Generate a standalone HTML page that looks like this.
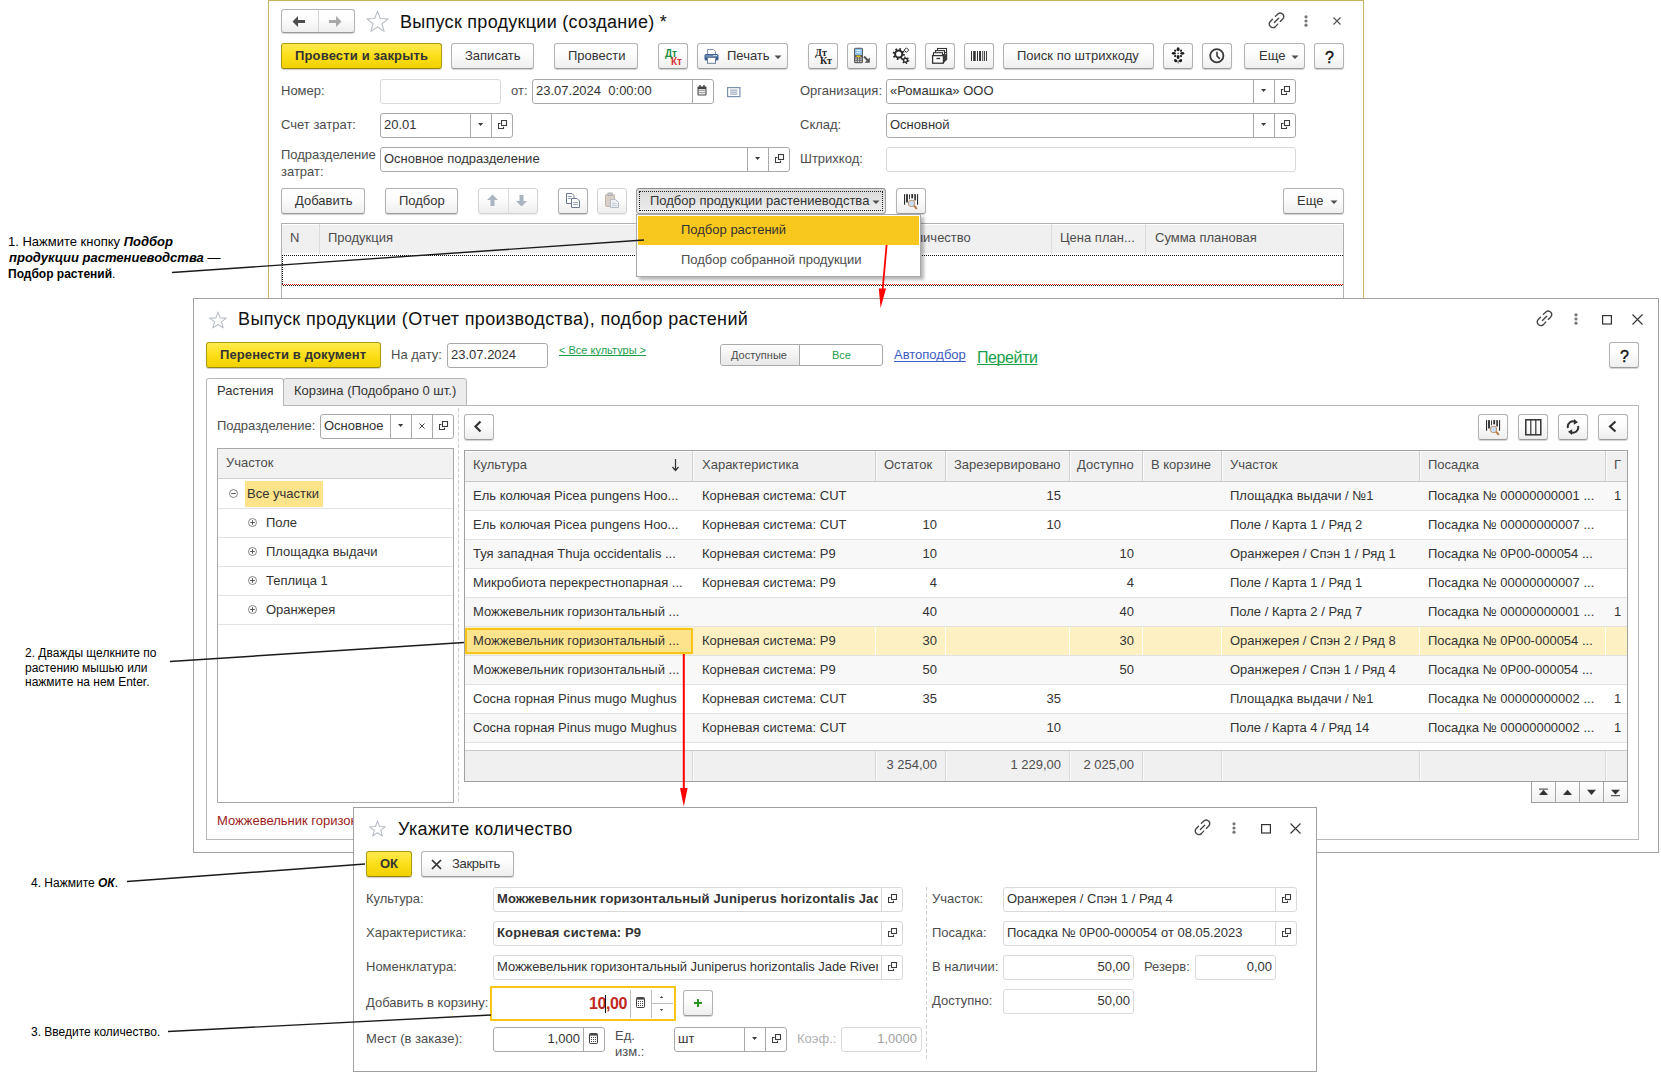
<!DOCTYPE html><html><head><meta charset='utf-8'><style>
*{box-sizing:border-box}
html,body{margin:0;padding:0;background:#fff;width:1661px;height:1073px;overflow:hidden;position:relative}
body{font-family:"Liberation Sans",sans-serif}
.t{position:absolute;white-space:pre;font-family:"Liberation Sans",sans-serif;text-decoration-skip-ink:none}
.b{position:absolute;border:1px solid #b3b3b3;border-bottom-color:#9a9a9a;border-radius:3px;background:linear-gradient(#ffffff 0%,#fdfdfd 40%,#eeeeee 100%);box-shadow:0 1px 1px rgba(0,0,0,.18)}
.yb{position:absolute;border:1px solid #ab9a12;border-bottom-color:#98870a;border-radius:3px;background:linear-gradient(#ffea4d 0%,#fcdf1a 50%,#f2d100 100%);box-shadow:0 1px 1px rgba(0,0,0,.2)}
.inp{position:absolute;border:1px solid #a9a9a9;border-radius:3px;background:#fff}
.inpl{position:absolute;border:1px solid #d9d9d9;border-radius:3px;background:#fff}
.win{position:absolute;background:#fff}
</style></head><body><div style='position:absolute;left:268px;top:0px;width:1096px;height:320px;border:1px solid #c8b55c;background:#fff'></div>
<div class='b' style='left:281px;top:9px;width:74px;height:24px;'></div>
<div style='position:absolute;left:318px;top:10px;width:1px;height:22px;background:#d6d6d6'></div>
<svg style='position:absolute;left:292px;top:15px;' width='14' height='13' viewBox='0 0 14 13'><path d='M0.5 6.5 L6 1 V5 H13 V8 H6 V12 Z' fill='#4d4d4d'/></svg>
<svg style='position:absolute;left:328px;top:15px;' width='14' height='13' viewBox='0 0 14 13'><path d='M13.5 6.5 L8 1 V5 H1 V8 H8 V12 Z' fill='#a8a8a8'/></svg>
<svg style='position:absolute;left:366px;top:10px;' width='23' height='25' viewBox='0 0 23 25'><polygon points='11.50,1.10 14.26,8.49 22.15,8.84 15.97,13.75 18.08,21.36 11.50,17.00 4.92,21.36 7.03,13.75 0.85,8.84 8.74,8.49' fill='none' stroke='#b8bec6' stroke-width='1.1' stroke-linejoin='round'/></svg>
<div class='t ' style='left:400px;top:13px;font-size:18px;line-height:18px;color:#111;letter-spacing:0.28px'>Выпуск продукции (создание) *</div>
<svg style='position:absolute;left:1268px;top:12px;' width='17' height='17' viewBox='0 0 17 17'><g fill='none' stroke='#444' stroke-width='1.35' stroke-linecap='round'><path d='M7.4 4.3 L10.2 1.8 Q12.6 0 14.8 2.3 Q16.8 4.6 14.7 7 L12.3 9.4'/><path d='M4.5 7.2 L2.1 9.7 Q0.2 12.2 2.4 14.5 Q4.8 16.7 7.4 14.6 L9.7 12.1'/><path d='M6.4 10.5 L10.7 6.3'/></g></svg>
<svg style='position:absolute;left:1304px;top:15px;' width='4' height='12' viewBox='0 0 4 12'><circle cx='2' cy='1.8' r='1.6' fill='#777'/><circle cx='2' cy='6' r='1.6' fill='#777'/><circle cx='2' cy='10.2' r='1.6' fill='#777'/></svg>
<svg style='position:absolute;left:1333px;top:17px;' width='8' height='8' viewBox='0 0 8 8'><path d='M0.5 0.5 L7.5 7.5 M7.5 0.5 L0.5 7.5' stroke='#555' stroke-width='1.2'/></svg>
<div class='yb' style='left:281px;top:43px;width:161px;height:26px;'></div>
<div class='t ' style='left:295px;top:49px;font-size:13px;line-height:13px;color:#333;font-weight:bold;letter-spacing:0.15px'>Провести и закрыть</div>
<div class='b' style='left:451px;top:43px;width:83px;height:26px;'></div>
<div class='t ' style='left:465px;top:49px;font-size:13px;line-height:13px;color:#333;'>Записать</div>
<div class='b' style='left:554px;top:43px;width:84px;height:26px;'></div>
<div class='t ' style='left:568px;top:49px;font-size:13px;line-height:13px;color:#333;'>Провести</div>
<div class='b' style='left:658px;top:43px;width:30px;height:26px;'></div>
<div class='t ' style='left:665px;top:49px;font-size:10px;line-height:10px;color:#1a9040;font-weight:bold;'>Дт</div>
<div class='t ' style='left:671px;top:57px;font-size:10px;line-height:10px;color:#d83535;font-weight:bold;'>Кт</div>
<div class='b' style='left:697px;top:43px;width:91px;height:26px;'></div>
<svg style='position:absolute;left:704px;top:49px;' width='16' height='15' viewBox='0 0 16 15'><path d='M3.5 0.5 H9.5 L11.5 2.5 V6 H3.5 Z' fill='#fff' stroke='#8090a8'/><rect x='0.5' y='5' width='14' height='6.5' rx='1.6' fill='#3d6296'/><rect x='1.5' y='6.5' width='12' height='1' fill='#9bb2d0'/><rect x='9.5' y='6' width='1.2' height='1' fill='#fff'/><rect x='11.5' y='6' width='1.2' height='1' fill='#fff'/><rect x='3.5' y='8.5' width='8' height='5.8' fill='#fff' stroke='#6a7d98'/></svg>
<div class='t ' style='left:727px;top:49px;font-size:13px;line-height:13px;color:#333;'>Печать</div>
<svg style='position:absolute;left:774px;top:55px;' width='8' height='5' viewBox='0 0 8 5'><path d='M0.5 0.5 L7.5 0.5 L4 4 Z' fill='#4d4d4d'/></svg>
<div class='b' style='left:808px;top:43px;width:30px;height:26px;'></div>
<div class='t ' style='left:815px;top:48px;font-size:10px;line-height:10px;color:#222;font-weight:bold;font-family:&quot;Liberation Serif&quot;,serif'>Дт</div>
<div class='t ' style='left:820px;top:56px;font-size:10px;line-height:10px;color:#222;font-weight:bold;font-family:&quot;Liberation Serif&quot;,serif'>Кт</div>
<div class='b' style='left:847px;top:43px;width:30px;height:26px;'></div>
<svg style='position:absolute;left:853px;top:47px;' width='18' height='17' viewBox='0 0 18 17'><rect x='1' y='0.8' width='9' height='15.4' rx='1.5' fill='#5a5a5a'/><rect x='2' y='1.8' width='7' height='6.2' fill='#8cc4f0'/><path d='M3.5 3.5 H7.5 M3.5 5.5 H7.5' stroke='#e8f4ff' stroke-width='0.9'/><rect x='3.4' y='8.6' width='4.2' height='1.3' fill='#f5d000'/><g fill='#e8e8e8'><rect x='2.3' y='10.4' width='1.4' height='1.1'/><rect x='4.8' y='10.4' width='1.4' height='1.1'/><rect x='7.3' y='10.4' width='1.4' height='1.1'/><rect x='2.3' y='12.2' width='1.4' height='1.1'/><rect x='4.8' y='12.2' width='1.4' height='1.1'/><rect x='7.3' y='12.2' width='1.4' height='1.1'/><rect x='2.3' y='14' width='1.4' height='1.1'/><rect x='4.8' y='14' width='1.4' height='1.1'/><rect x='7.3' y='14' width='1.4' height='1.1'/></g><path d='M11 9.5 L15.2 13.7' stroke='#555' stroke-width='2'/><path d='M16.8 10.5 V15.8 H11.5 Z' fill='#555'/></svg>
<div class='b' style='left:886px;top:43px;width:30px;height:26px;'></div>
<svg style='position:absolute;left:892px;top:47px;' width='18' height='17' viewBox='0 0 18 17'><g fill='none' stroke='#2a2a2a'><circle cx='6.7' cy='7' r='3.6' stroke-width='2'/><circle cx='6.7' cy='7' r='5' stroke-width='2.2' stroke-dasharray='1.7 2.23'/><circle cx='13.5' cy='13.3' r='2' stroke-width='1.5'/><circle cx='13.5' cy='13.3' r='3.1' stroke-width='1.5' stroke-dasharray='1.2 2.05'/><path d='M14.4 0.8 L16.7 3.1 L14.4 5.4 L12.1 3.1 Z' stroke-width='1'/></g></svg>
<div class='b' style='left:925px;top:43px;width:30px;height:26px;'></div>
<svg style='position:absolute;left:931px;top:47px;' width='17' height='17' viewBox='0 0 17 17'><g stroke='#333' stroke-width='1.1' fill='#fff'><rect x='6.5' y='1.5' width='9' height='4'/><rect x='4.5' y='3.6' width='9' height='4'/><rect x='2.5' y='5.7' width='9' height='4'/></g><path d='M12.5 9 L16.2 5.5 V12.5 L12.8 16 Z' fill='#3a3a3a'/><rect x='1.6' y='8.6' width='10.8' height='7.6' fill='#fff' stroke='#333' stroke-width='1.3'/><rect x='5.5' y='10.8' width='3.6' height='1.4' fill='#333'/></svg>
<div class='b' style='left:964px;top:43px;width:30px;height:26px;'></div>
<svg style='position:absolute;left:970px;top:50px;' width='18' height='12' viewBox='0 0 18 12'><g fill='#2e2e2e'><rect x='1' y='1' width='1' height='10'/><rect x='3.2' y='1' width='2.5' height='10'/><rect x='7' y='1' width='1' height='10'/><rect x='9.1' y='1' width='1.9' height='10'/><rect x='12.3' y='1' width='0.9' height='10'/><rect x='14.1' y='1' width='0.9' height='10'/><rect x='16.1' y='1' width='0.9' height='10'/></g></svg>
<div class='b' style='left:1003px;top:43px;width:151px;height:26px;'></div>
<div class='t ' style='left:1017px;top:49px;font-size:13px;line-height:13px;color:#333;'>Поиск по штрихкоду</div>
<div class='b' style='left:1163px;top:43px;width:30px;height:26px;'></div>
<svg style='position:absolute;left:1170px;top:47px;' width='16' height='17' viewBox='0 0 16 17'><g fill='#1a1a1a'><ellipse cx='8.1' cy='2.3' rx='1.5' ry='2'/><ellipse cx='8.1' cy='10.1' rx='1.5' ry='2'/><ellipse cx='3.8' cy='6.3' rx='2' ry='1.4'/><ellipse cx='12.3' cy='6.3' rx='2' ry='1.4'/><ellipse cx='5.2' cy='3.7' rx='1.2' ry='1' transform='rotate(45 5.2 3.7)'/><ellipse cx='11' cy='3.7' rx='1.2' ry='1' transform='rotate(-45 11 3.7)'/><ellipse cx='5.2' cy='9' rx='1.2' ry='1' transform='rotate(-45 5.2 9)'/><ellipse cx='11' cy='9' rx='1.2' ry='1' transform='rotate(45 11 9)'/><rect x='7.4' y='5.8' width='1.5' height='1' /><ellipse cx='5.7' cy='13.7' rx='1.8' ry='1.4' transform='rotate(30 5.7 13.7)'/><ellipse cx='10.5' cy='13.7' rx='1.8' ry='1.4' transform='rotate(-30 10.5 13.7)'/></g><rect x='7.5' y='13.5' width='1.3' height='3' fill='#777'/></svg>
<div class='b' style='left:1202px;top:43px;width:30px;height:26px;'></div>
<svg style='position:absolute;left:1208px;top:47px;' width='18' height='18' viewBox='0 0 18 18'><circle cx='8.8' cy='8.8' r='6.6' fill='none' stroke='#3a3a3a' stroke-width='1.8'/><path d='M9 5.2 V9 L11.4 11.4' fill='none' stroke='#3a3a3a' stroke-width='1.6' stroke-linecap='round'/></svg>
<div class='b' style='left:1244px;top:43px;width:61px;height:26px;'></div>
<div class='t ' style='left:1259px;top:49px;font-size:13px;line-height:13px;color:#333;'>Еще</div>
<svg style='position:absolute;left:1291px;top:55px;' width='8' height='5' viewBox='0 0 8 5'><path d='M0.5 0.5 L7.5 0.5 L4 4 Z' fill='#4d4d4d'/></svg>
<div class='b' style='left:1314px;top:43px;width:30px;height:26px;'></div>
<div class='t ' style='left:1325px;top:50px;font-size:16px;line-height:16px;color:#111;-webkit-text-stroke:0.4px #111'>?</div>
<div class='t ' style='left:281px;top:84px;font-size:13px;line-height:13px;color:#4d4d4d;'>Номер:</div>
<div class='inpl' style='left:380px;top:79px;width:121px;height:25px;'></div>
<div class='t ' style='left:511px;top:84px;font-size:13px;line-height:13px;color:#4d4d4d;'>от:</div>
<div class='inp' style='left:532px;top:79px;width:182px;height:25px;'></div>
<div style='position:absolute;left:692px;top:80px;width:1px;height:23px;background:#a9a9a9'></div>
<svg style='position:absolute;left:697px;top:85px;' width='10' height='11' viewBox='0 0 10 11'><rect x='0.5' y='1.5' width='9' height='9' rx='1' fill='#444'/><rect x='1.6' y='4.2' width='6.8' height='5.3' fill='#fff'/><rect x='2.3' y='0' width='1.4' height='2.4' fill='#444'/><rect x='6.3' y='0' width='1.4' height='2.4' fill='#444'/><g fill='#444'><circle cx='3' cy='5.6' r='.65'/><circle cx='5' cy='5.6' r='.65'/><circle cx='7' cy='5.6' r='.65'/><circle cx='3' cy='7.7' r='.65'/><circle cx='5' cy='7.7' r='.65'/><circle cx='7' cy='7.7' r='.65'/></g></svg>
<div class='t' style='left:536px;top:84px;font-size:13px;line-height:13px;color:#333;overflow:hidden;width:154px'>23.07.2024  0:00:00</div>
<svg style='position:absolute;left:727px;top:87px;' width='14' height='11' viewBox='0 0 14 11'><rect x='0.6' y='0.6' width='12.3' height='9' fill='none' stroke='#7b8fae' stroke-width='1.2'/><g fill='#8a9bb5'><rect x='3' y='2.6' width='7.5' height='1'/><rect x='3' y='4.6' width='7.5' height='1'/><rect x='3' y='6.6' width='7.5' height='1'/></g></svg>
<div class='t ' style='left:800px;top:84px;font-size:13px;line-height:13px;color:#4d4d4d;'>Организация:</div>
<div class='inp' style='left:886px;top:79px;width:410px;height:25px;'></div>
<div style='position:absolute;left:1253px;top:80px;width:1px;height:23px;background:#a9a9a9'></div>
<div style='position:absolute;left:1274px;top:80px;width:1px;height:23px;background:#a9a9a9'></div>
<svg style='position:absolute;left:1261px;top:89px;' width='6' height='4' viewBox='0 0 6 4'><path d='M0 0 H5.2 L2.6 3 Z' fill='#3c3c3c'/></svg>
<svg style='position:absolute;left:1281px;top:86px;' width='10' height='10' viewBox='0 0 10 10'><g fill='none' stroke='#3c3c3c' stroke-width='1.1'><rect x='3.5' y='0.5' width='5' height='5'/><path d='M2.5 3.5 H0.5 V8.5 H5.5 V6.8'/></g></svg>
<div class='t' style='left:890px;top:84px;font-size:13px;line-height:13px;color:#333;overflow:hidden;width:361px'>«Ромашка» ООО</div>
<div class='t ' style='left:281px;top:118px;font-size:13px;line-height:13px;color:#4d4d4d;'>Счет затрат:</div>
<div class='inp' style='left:380px;top:113px;width:133px;height:25px;'></div>
<div style='position:absolute;left:470px;top:114px;width:1px;height:23px;background:#a9a9a9'></div>
<div style='position:absolute;left:491px;top:114px;width:1px;height:23px;background:#a9a9a9'></div>
<svg style='position:absolute;left:478px;top:123px;' width='6' height='4' viewBox='0 0 6 4'><path d='M0 0 H5.2 L2.6 3 Z' fill='#3c3c3c'/></svg>
<svg style='position:absolute;left:498px;top:120px;' width='10' height='10' viewBox='0 0 10 10'><g fill='none' stroke='#3c3c3c' stroke-width='1.1'><rect x='3.5' y='0.5' width='5' height='5'/><path d='M2.5 3.5 H0.5 V8.5 H5.5 V6.8'/></g></svg>
<div class='t' style='left:384px;top:118px;font-size:13px;line-height:13px;color:#333;overflow:hidden;width:84px'>20.01</div>
<div class='t ' style='left:800px;top:118px;font-size:13px;line-height:13px;color:#4d4d4d;'>Склад:</div>
<div class='inp' style='left:886px;top:113px;width:410px;height:25px;'></div>
<div style='position:absolute;left:1253px;top:114px;width:1px;height:23px;background:#a9a9a9'></div>
<div style='position:absolute;left:1274px;top:114px;width:1px;height:23px;background:#a9a9a9'></div>
<svg style='position:absolute;left:1261px;top:123px;' width='6' height='4' viewBox='0 0 6 4'><path d='M0 0 H5.2 L2.6 3 Z' fill='#3c3c3c'/></svg>
<svg style='position:absolute;left:1281px;top:120px;' width='10' height='10' viewBox='0 0 10 10'><g fill='none' stroke='#3c3c3c' stroke-width='1.1'><rect x='3.5' y='0.5' width='5' height='5'/><path d='M2.5 3.5 H0.5 V8.5 H5.5 V6.8'/></g></svg>
<div class='t' style='left:890px;top:118px;font-size:13px;line-height:13px;color:#333;overflow:hidden;width:361px'>Основной</div>
<div class='t ' style='left:281px;top:148px;font-size:13px;line-height:13px;color:#4d4d4d;'>Подразделение</div>
<div class='t ' style='left:281px;top:165px;font-size:13px;line-height:13px;color:#4d4d4d;'>затрат:</div>
<div class='inp' style='left:380px;top:147px;width:410px;height:25px;'></div>
<div style='position:absolute;left:747px;top:148px;width:1px;height:23px;background:#a9a9a9'></div>
<div style='position:absolute;left:768px;top:148px;width:1px;height:23px;background:#a9a9a9'></div>
<svg style='position:absolute;left:755px;top:157px;' width='6' height='4' viewBox='0 0 6 4'><path d='M0 0 H5.2 L2.6 3 Z' fill='#3c3c3c'/></svg>
<svg style='position:absolute;left:775px;top:154px;' width='10' height='10' viewBox='0 0 10 10'><g fill='none' stroke='#3c3c3c' stroke-width='1.1'><rect x='3.5' y='0.5' width='5' height='5'/><path d='M2.5 3.5 H0.5 V8.5 H5.5 V6.8'/></g></svg>
<div class='t' style='left:384px;top:152px;font-size:13px;line-height:13px;color:#333;overflow:hidden;width:361px'>Основное подразделение</div>
<div class='t ' style='left:800px;top:152px;font-size:13px;line-height:13px;color:#4d4d4d;'>Штрихкод:</div>
<div class='inpl' style='left:886px;top:147px;width:410px;height:25px;'></div>
<div class='b' style='left:281px;top:188px;width:84px;height:26px;'></div>
<div class='t ' style='left:295px;top:194px;font-size:13px;line-height:13px;color:#333;'>Добавить</div>
<div class='b' style='left:385px;top:188px;width:73px;height:26px;'></div>
<div class='t ' style='left:399px;top:194px;font-size:13px;line-height:13px;color:#333;'>Подбор</div>
<div class='b' style='left:478px;top:188px;width:60px;height:26px;border-color:#d4d4d4;box-shadow:0 1px 1px rgba(0,0,0,.08)'></div>
<div style='position:absolute;left:508px;top:189px;width:1px;height:24px;background:#dedede'></div>
<svg style='position:absolute;left:486px;top:194px;' width='13' height='13' viewBox='0 0 13 13'><path d='M6.5 0.5 L12 6 H8.5 V12 H4.5 V6 H1 Z' fill='#a9b4bf'/></svg>
<svg style='position:absolute;left:515px;top:194px;' width='13' height='13' viewBox='0 0 13 13'><path d='M6.5 12.5 L12 7 H8.5 V1 H4.5 V7 H1 Z' fill='#a9b4bf'/></svg>
<div class='b' style='left:558px;top:188px;width:30px;height:26px;'></div>
<svg style='position:absolute;left:565px;top:192px;' width='16' height='16' viewBox='0 0 16 16'><path d='M1.5 1.5 H7 L9 3.5 V11.5 H1.5 Z' fill='#fff' stroke='#6a7a90'/><g fill='#8a9ab0'><rect x='3' y='4' width='4' height='0.9'/><rect x='3' y='6' width='4' height='0.9'/></g><path d='M6.5 6.5 H12 L14.5 9 V15.5 H6.5 Z' fill='#fff' stroke='#6a7a90'/><g fill='#8a9ab0'><rect x='8' y='10' width='5' height='0.9'/><rect x='8' y='12' width='5' height='0.9'/></g></svg>
<div class='b' style='left:597px;top:188px;width:30px;height:26px;border-color:#d4d4d4;box-shadow:0 1px 1px rgba(0,0,0,.08)'></div>
<svg style='position:absolute;left:604px;top:192px;' width='16' height='16' viewBox='0 0 16 16'><rect x='1.5' y='2.5' width='9' height='12' rx='1' fill='#d8d0c8' stroke='#c0b4a8'/><rect x='4' y='1' width='4' height='2.5' fill='#ccc' stroke='#b0b0b0'/><path d='M6.5 7.5 H11.5 L14.5 10.5 V15.5 H6.5 Z' fill='#eef1f4' stroke='#b4bcc6'/><g fill='#c0c8d2'><rect x='8' y='11' width='5' height='0.9'/><rect x='8' y='13' width='5' height='0.9'/></g></svg>
<div style='position:absolute;left:636px;top:188px;width:250px;height:26px;border:1px solid #a0a0a0;border-top-color:#8c8c8c;border-radius:3px;background:linear-gradient(#d9d9d9,#e6e6e6 60%,#ededed)'></div>
<div style='position:absolute;left:639px;top:191px;width:244px;height:20px;border:1px dotted #222'></div>
<div class='t ' style='left:650px;top:194px;font-size:13px;line-height:13px;color:#333;'>Подбор продукции растениеводства</div>
<svg style='position:absolute;left:872px;top:200px;' width='8' height='5' viewBox='0 0 8 5'><path d='M0.5 0.5 L7.5 0.5 L4 4 Z' fill='#4d4d4d'/></svg>
<div class='b' style='left:896px;top:188px;width:30px;height:26px;'></div>
<svg style='position:absolute;left:903px;top:193px;' width='17' height='17' viewBox='0 0 17 17'><g fill='#2a2a2a'><rect x='1' y='1' width='1.1' height='10.7' rx='0.5'/><rect x='3.1' y='1' width='1.8' height='8.6' rx='0.6'/><rect x='6.1' y='1' width='0.9' height='5.3' rx='0.4'/><rect x='8.3' y='1' width='1.8' height='4.4' rx='0.6'/><rect x='11.3' y='1' width='1.6' height='6.5' rx='0.6'/><rect x='14' y='1' width='1.1' height='10.7' rx='0.5'/></g><path d='M11 12.6 L13.4 15.3' stroke='#b87a48' stroke-width='2' stroke-linecap='round'/><circle cx='8.5' cy='10.4' r='3.1' fill='#c8def8' stroke='#c29a74' stroke-width='1.1'/></svg>
<div class='b' style='left:1283px;top:188px;width:61px;height:26px;'></div>
<div class='t ' style='left:1297px;top:194px;font-size:13px;line-height:13px;color:#333;'>Еще</div>
<svg style='position:absolute;left:1330px;top:200px;' width='8' height='5' viewBox='0 0 8 5'><path d='M0.5 0.5 L7.5 0.5 L4 4 Z' fill='#4d4d4d'/></svg>
<div style='position:absolute;left:281px;top:223px;width:1063px;height:90px;border:1px solid #b0b0b0;background:#fff'></div>
<div style='position:absolute;left:282px;top:224px;width:1061px;height:29px;background:#f0f0f0;border-top:1px solid #fff'></div>
<div style='position:absolute;left:319px;top:224px;width:1px;height:30px;background:#dcdcdc'></div>
<div style='position:absolute;left:1051px;top:224px;width:1px;height:30px;background:#dcdcdc'></div>
<div style='position:absolute;left:1145px;top:224px;width:1px;height:30px;background:#dcdcdc'></div>
<div class='t ' style='left:290px;top:231px;font-size:13px;line-height:13px;color:#4d4d4d;'>N</div>
<div class='t ' style='left:328px;top:231px;font-size:13px;line-height:13px;color:#4d4d4d;'>Продукция</div>
<div class='t ' style='left:901px;top:231px;font-size:13px;line-height:13px;color:#4d4d4d;'>Количество</div>
<div class='t ' style='left:1060px;top:231px;font-size:13px;line-height:13px;color:#4d4d4d;'>Цена план...</div>
<div class='t ' style='left:1155px;top:231px;font-size:13px;line-height:13px;color:#4d4d4d;'>Сумма плановая</div>
<div style='position:absolute;left:282px;top:255px;width:1061px;height:1px;background:repeating-linear-gradient(90deg,#111 0 1px,transparent 1px 2px)'></div>
<div style='position:absolute;left:282px;top:255px;width:1px;height:30px;background:repeating-linear-gradient(180deg,#111 0 1px,transparent 1px 2px)'></div>
<div style='position:absolute;left:282px;top:284px;width:1061px;height:1px;background:repeating-linear-gradient(90deg,#f00 0 1px,transparent 1px 2px)'></div>
<div style='position:absolute;left:283px;top:285px;width:1060px;height:1px;background:repeating-linear-gradient(90deg,#111 0 1px,transparent 1px 2px)'></div>
<div style='position:absolute;left:636px;top:214px;width:285px;height:63px;background:#fff;border:1px solid #a8a8a8;box-shadow:3px 3px 3px rgba(0,0,0,.28)'></div>
<div style='position:absolute;left:638px;top:216px;width:281px;height:29px;background:#f8c81e'></div>
<div class='t ' style='left:681px;top:223px;font-size:13px;line-height:13px;color:#333;'>Подбор растений</div>
<div class='t ' style='left:681px;top:253px;font-size:13px;line-height:13px;color:#4d4d4d;'>Подбор собранной продукции</div>
<div style='position:absolute;left:193px;top:298px;width:1466px;height:555px;border:1px solid #a0a0a0;background:#fff'></div>
<svg style='position:absolute;left:209px;top:311px;' width='18' height='20' viewBox='0 0 18 20'><polygon points='9.00,1.10 11.15,6.84 17.27,7.11 12.48,10.93 14.11,16.84 9.00,13.45 3.89,16.84 5.52,10.93 0.73,7.11 6.85,6.84' fill='none' stroke='#b8bec6' stroke-width='1.1' stroke-linejoin='round'/></svg>
<div class='t ' style='left:238px;top:310px;font-size:18px;line-height:18px;color:#111;letter-spacing:0.37px'>Выпуск продукции (Отчет производства), подбор растений</div>
<svg style='position:absolute;left:1536px;top:310px;' width='17' height='17' viewBox='0 0 17 17'><g fill='none' stroke='#444' stroke-width='1.35' stroke-linecap='round'><path d='M7.4 4.3 L10.2 1.8 Q12.6 0 14.8 2.3 Q16.8 4.6 14.7 7 L12.3 9.4'/><path d='M4.5 7.2 L2.1 9.7 Q0.2 12.2 2.4 14.5 Q4.8 16.7 7.4 14.6 L9.7 12.1'/><path d='M6.4 10.5 L10.7 6.3'/></g></svg>
<svg style='position:absolute;left:1574px;top:313px;' width='4' height='12' viewBox='0 0 4 12'><circle cx='2' cy='1.8' r='1.6' fill='#777'/><circle cx='2' cy='6' r='1.6' fill='#777'/><circle cx='2' cy='10.2' r='1.6' fill='#777'/></svg>
<svg style='position:absolute;left:1602px;top:315px;' width='10' height='10' viewBox='0 0 10 10'><rect x='0.6' y='0.6' width='8.8' height='8.4' fill='none' stroke='#333' stroke-width='1.2'/></svg>
<svg style='position:absolute;left:1632px;top:314px;' width='11' height='11' viewBox='0 0 11 11'><path d='M0.5 0.5 L10.5 10.5 M10.5 0.5 L0.5 10.5' stroke='#333' stroke-width='1.1'/></svg>
<div class='yb' style='left:206px;top:342px;width:175px;height:26px;'></div>
<div class='t ' style='left:220px;top:348px;font-size:13px;line-height:13px;color:#333;font-weight:bold;letter-spacing:0.1px'>Перенести в документ</div>
<div class='t ' style='left:391px;top:348px;font-size:13px;line-height:13px;color:#4d4d4d;'>На дату:</div>
<div class='inp' style='left:447px;top:343px;width:101px;height:25px;'></div>
<div class='t ' style='left:451px;top:348px;font-size:13px;line-height:13px;color:#333;'>23.07.2024</div>
<div class='t ' style='left:559px;top:345px;font-size:11px;line-height:11px;color:#1a9e4a;text-decoration:underline'>&lt; Все культуры &gt;</div>
<div style='position:absolute;left:720px;top:344px;width:163px;height:22px;border:1px solid #a9a9a9;border-radius:3px;background:#fff'></div>
<div style='position:absolute;left:721px;top:345px;width:79px;height:20px;background:linear-gradient(#fdfdfd,#e8e8e8);border-radius:2px 0 0 2px'></div>
<div style='position:absolute;left:799px;top:345px;width:1px;height:20px;background:#a9a9a9'></div>
<div class='t ' style='left:731px;top:350px;font-size:11px;line-height:11px;color:#4d4d4d;'>Доступные</div>
<div class='t ' style='left:832px;top:350px;font-size:11px;line-height:11px;color:#1a9e4a;'>Все</div>
<div class='t ' style='left:894px;top:348px;font-size:13px;line-height:13px;color:#3a5cc0;text-decoration:underline;text-underline-offset:2px'>Автоподбор</div>
<div class='t ' style='left:977px;top:350px;font-size:16px;line-height:16px;color:#1a9e4a;text-decoration:underline;letter-spacing:-0.4px'>Перейти</div>
<div class='b' style='left:1609px;top:342px;width:30px;height:26px;'></div>
<div class='t ' style='left:1620px;top:349px;font-size:16px;line-height:16px;color:#111;-webkit-text-stroke:0.4px #111'>?</div>
<div style='position:absolute;left:206px;top:405px;width:1433px;height:435px;border:1px solid #b8b8b8;background:#fff'></div>
<div style='position:absolute;left:206px;top:378px;width:78px;height:28px;border:1px solid #b8b8b8;border-bottom:none;border-radius:3px 3px 0 0;background:#fff'></div>
<div style='position:absolute;left:283px;top:378px;width:184px;height:28px;border:1px solid #b8b8b8;border-radius:3px 3px 0 0;background:#ececec'></div>
<div class='t ' style='left:217px;top:384px;font-size:13px;line-height:13px;color:#333;'>Растения</div>
<div class='t ' style='left:294px;top:384px;font-size:13px;line-height:13px;color:#333;'>Корзина (Подобрано 0 шт.)</div>
<div class='t ' style='left:217px;top:419px;font-size:13px;line-height:13px;color:#4d4d4d;'>Подразделение:</div>
<div class='inp' style='left:320px;top:414px;width:134px;height:25px;'></div>
<div style='position:absolute;left:390px;top:415px;width:1px;height:23px;background:#a9a9a9'></div>
<div style='position:absolute;left:411px;top:415px;width:1px;height:23px;background:#a9a9a9'></div>
<div style='position:absolute;left:432px;top:415px;width:1px;height:23px;background:#a9a9a9'></div>
<svg style='position:absolute;left:398px;top:424px;' width='6' height='4' viewBox='0 0 6 4'><path d='M0 0 H5.2 L2.6 3 Z' fill='#3c3c3c'/></svg>
<svg style='position:absolute;left:419px;top:423px;' width='6' height='6' viewBox='0 0 6 6'><path d='M0.5 0.5 L5.5 5.5 M5.5 0.5 L0.5 5.5' stroke='#444' stroke-width='1.0'/></svg>
<svg style='position:absolute;left:439px;top:421px;' width='10' height='10' viewBox='0 0 10 10'><g fill='none' stroke='#3c3c3c' stroke-width='1.1'><rect x='3.5' y='0.5' width='5' height='5'/><path d='M2.5 3.5 H0.5 V8.5 H5.5 V6.8'/></g></svg>
<div class='t' style='left:324px;top:419px;font-size:13px;line-height:13px;color:#333;overflow:hidden;width:64px'>Основное</div>
<div style='position:absolute;left:458px;top:408px;width:1px;height:396px;background:repeating-linear-gradient(180deg,#d2d2d2 0 4px,transparent 4px 6px)'></div>
<div class='b' style='left:464px;top:414px;width:30px;height:26px;'></div>
<svg style='position:absolute;left:473px;top:420px;' width='10' height='13' viewBox='0 0 10 13'><path d='M7.5 1.5 L2.5 6.5 L7.5 11.5' fill='none' stroke='#333' stroke-width='2.2'/></svg>
<div style='position:absolute;left:217px;top:448px;width:237px;height:355px;border:1px solid #a8a8a8;background:#fff'></div>
<div style='position:absolute;left:218px;top:449px;width:235px;height:29px;background:#f2f2f2'></div>
<div style='position:absolute;left:218px;top:478px;width:235px;height:1px;background:#d0d0d0'></div>
<div class='t ' style='left:226px;top:456px;font-size:13px;line-height:13px;color:#4d4d4d;'>Участок</div>
<div style='position:absolute;left:218px;top:508px;width:235px;height:1px;background:#e3e3e3'></div>
<div style='position:absolute;left:218px;top:537px;width:235px;height:1px;background:#e3e3e3'></div>
<div style='position:absolute;left:218px;top:566px;width:235px;height:1px;background:#e3e3e3'></div>
<div style='position:absolute;left:218px;top:595px;width:235px;height:1px;background:#e3e3e3'></div>
<div style='position:absolute;left:218px;top:624px;width:235px;height:1px;background:#e3e3e3'></div>
<div style='position:absolute;left:245px;top:481px;width:78px;height:26px;background:#fde38a'></div>
<svg style='position:absolute;left:229px;top:489px;' width='9' height='9' viewBox='0 0 9 9'><circle cx='4.5' cy='4.5' r='4' fill='none' stroke='#777' stroke-width='0.9'/><path d='M2.2 4.5 H6.8' stroke='#555' stroke-width='1'/></svg>
<div class='t ' style='left:247px;top:487px;font-size:13px;line-height:13px;color:#333;'>Все участки</div>
<svg style='position:absolute;left:248px;top:518px;' width='9' height='9' viewBox='0 0 9 9'><circle cx='4.5' cy='4.5' r='4' fill='none' stroke='#777' stroke-width='0.9'/><path d='M2.2 4.5 H6.8' stroke='#555' stroke-width='1'/><path d='M4.5 2.2 V6.8' stroke='#555' stroke-width='1'/></svg>
<div class='t ' style='left:266px;top:516px;font-size:13px;line-height:13px;color:#333;'>Поле</div>
<svg style='position:absolute;left:248px;top:547px;' width='9' height='9' viewBox='0 0 9 9'><circle cx='4.5' cy='4.5' r='4' fill='none' stroke='#777' stroke-width='0.9'/><path d='M2.2 4.5 H6.8' stroke='#555' stroke-width='1'/><path d='M4.5 2.2 V6.8' stroke='#555' stroke-width='1'/></svg>
<div class='t ' style='left:266px;top:545px;font-size:13px;line-height:13px;color:#333;'>Площадка выдачи</div>
<svg style='position:absolute;left:248px;top:576px;' width='9' height='9' viewBox='0 0 9 9'><circle cx='4.5' cy='4.5' r='4' fill='none' stroke='#777' stroke-width='0.9'/><path d='M2.2 4.5 H6.8' stroke='#555' stroke-width='1'/><path d='M4.5 2.2 V6.8' stroke='#555' stroke-width='1'/></svg>
<div class='t ' style='left:266px;top:574px;font-size:13px;line-height:13px;color:#333;'>Теплица 1</div>
<svg style='position:absolute;left:248px;top:605px;' width='9' height='9' viewBox='0 0 9 9'><circle cx='4.5' cy='4.5' r='4' fill='none' stroke='#777' stroke-width='0.9'/><path d='M2.2 4.5 H6.8' stroke='#555' stroke-width='1'/><path d='M4.5 2.2 V6.8' stroke='#555' stroke-width='1'/></svg>
<div class='t ' style='left:266px;top:603px;font-size:13px;line-height:13px;color:#333;'>Оранжерея</div>
<div class='b' style='left:1478px;top:414px;width:30px;height:26px;'></div>
<svg style='position:absolute;left:1485px;top:419px;' width='17' height='17' viewBox='0 0 17 17'><g fill='#2a2a2a'><rect x='1' y='1' width='1.1' height='10.7' rx='0.5'/><rect x='3.1' y='1' width='1.8' height='8.6' rx='0.6'/><rect x='6.1' y='1' width='0.9' height='5.3' rx='0.4'/><rect x='8.3' y='1' width='1.8' height='4.4' rx='0.6'/><rect x='11.3' y='1' width='1.6' height='6.5' rx='0.6'/><rect x='14' y='1' width='1.1' height='10.7' rx='0.5'/></g><path d='M11 12.6 L13.4 15.3' stroke='#b87a48' stroke-width='2' stroke-linecap='round'/><circle cx='8.5' cy='10.4' r='3.1' fill='#c8def8' stroke='#c29a74' stroke-width='1.1'/></svg>
<div class='b' style='left:1518px;top:414px;width:30px;height:26px;'></div>
<svg style='position:absolute;left:1525px;top:419px;' width='17' height='17' viewBox='0 0 17 17'><rect x='0.8' y='0.8' width='15' height='15' fill='none' stroke='#333' stroke-width='1.5'/><path d='M5.8 1 V16 M10.8 1 V16' stroke='#333' stroke-width='1.2'/></svg>
<div class='b' style='left:1558px;top:414px;width:30px;height:26px;'></div>
<svg style='position:absolute;left:1566px;top:418px;' width='14' height='18' viewBox='0 0 14 18'><path d='M2 10 A5.2 5.2 0 0 1 9.5 4' fill='none' stroke='#333' stroke-width='2'/><path d='M8 1 L12 4.2 L7.8 6.8 Z' fill='#333'/><path d='M12 8 A5.2 5.2 0 0 1 4.5 14' fill='none' stroke='#333' stroke-width='2'/><path d='M6 17 L2 13.8 L6.2 11.2 Z' fill='#333'/></svg>
<div class='b' style='left:1598px;top:414px;width:30px;height:26px;'></div>
<svg style='position:absolute;left:1607px;top:420px;' width='11' height='13' viewBox='0 0 11 13'><path d='M8.5 1.5 L3 6.5 L8.5 11.5' fill='none' stroke='#333' stroke-width='2.2'/></svg>
<div style='position:absolute;left:464px;top:450px;width:1164px;height:332px;border:1px solid #a0a0a0;background:#fff'></div>
<div style='position:absolute;left:465px;top:451px;width:1162px;height:30px;background:#f0f0f0;border-top:1px solid #fff'></div>
<div style='position:absolute;left:465px;top:481px;width:1162px;height:1px;background:#c8c8c8'></div>
<div style='position:absolute;left:692px;top:451px;width:1px;height:30px;background:#d0d0d0'></div>
<div style='position:absolute;left:693px;top:452px;width:1px;height:29px;background:#fafafa'></div>
<div style='position:absolute;left:875px;top:451px;width:1px;height:30px;background:#d0d0d0'></div>
<div style='position:absolute;left:876px;top:452px;width:1px;height:29px;background:#fafafa'></div>
<div style='position:absolute;left:945px;top:451px;width:1px;height:30px;background:#d0d0d0'></div>
<div style='position:absolute;left:946px;top:452px;width:1px;height:29px;background:#fafafa'></div>
<div style='position:absolute;left:1069px;top:451px;width:1px;height:30px;background:#d0d0d0'></div>
<div style='position:absolute;left:1070px;top:452px;width:1px;height:29px;background:#fafafa'></div>
<div style='position:absolute;left:1142px;top:451px;width:1px;height:30px;background:#d0d0d0'></div>
<div style='position:absolute;left:1143px;top:452px;width:1px;height:29px;background:#fafafa'></div>
<div style='position:absolute;left:1221px;top:451px;width:1px;height:30px;background:#d0d0d0'></div>
<div style='position:absolute;left:1222px;top:452px;width:1px;height:29px;background:#fafafa'></div>
<div style='position:absolute;left:1419px;top:451px;width:1px;height:30px;background:#d0d0d0'></div>
<div style='position:absolute;left:1420px;top:452px;width:1px;height:29px;background:#fafafa'></div>
<div style='position:absolute;left:1605px;top:451px;width:1px;height:30px;background:#d0d0d0'></div>
<div style='position:absolute;left:1606px;top:452px;width:1px;height:29px;background:#fafafa'></div>
<div class='t ' style='left:473px;top:458px;font-size:13px;line-height:13px;color:#4d4d4d;'>Культура</div>
<div class='t ' style='left:702px;top:458px;font-size:13px;line-height:13px;color:#4d4d4d;'>Характеристика</div>
<div class='t ' style='left:884px;top:458px;font-size:13px;line-height:13px;color:#4d4d4d;'>Остаток</div>
<div class='t ' style='left:954px;top:458px;font-size:13px;line-height:13px;color:#4d4d4d;'>Зарезервировано</div>
<div class='t ' style='left:1077px;top:458px;font-size:13px;line-height:13px;color:#4d4d4d;'>Доступно</div>
<div class='t ' style='left:1151px;top:458px;font-size:13px;line-height:13px;color:#4d4d4d;'>В корзине</div>
<div class='t ' style='left:1230px;top:458px;font-size:13px;line-height:13px;color:#4d4d4d;'>Участок</div>
<div class='t ' style='left:1428px;top:458px;font-size:13px;line-height:13px;color:#4d4d4d;'>Посадка</div>
<div class='t ' style='left:1614px;top:458px;font-size:13px;line-height:13px;color:#4d4d4d;'>Г</div>
<svg style='position:absolute;left:671px;top:459px;' width='9' height='13' viewBox='0 0 9 13'><path d='M4.5 0 V11' stroke='#333' stroke-width='1.2'/><path d='M1.5 8 L4.5 11.5 L7.5 8' fill='none' stroke='#333' stroke-width='1.3'/></svg>
<div style='position:absolute;left:465px;top:482px;width:1162px;height:28px;background:#f8f8f8'></div>
<div style='position:absolute;left:465px;top:510px;width:1162px;height:1px;background:#e2e2e2'></div>
<div class='t ' style='left:473px;top:489px;font-size:13px;line-height:13px;color:#333;'>Ель колючая Picea pungens Hoo...</div>
<div class='t ' style='left:702px;top:489px;font-size:13px;line-height:13px;color:#333;'>Корневая система: CUT</div>
<div class='t' style='right:600px;top:489px;font-size:13px;line-height:13px;color:#333;'>15</div>
<div class='t ' style='left:1230px;top:489px;font-size:13px;line-height:13px;color:#333;'>Площадка выдачи / №1</div>
<div class='t ' style='left:1428px;top:489px;font-size:13px;line-height:13px;color:#333;'>Посадка № 00000000001 ...</div>
<div class='t ' style='left:1614px;top:489px;font-size:13px;line-height:13px;color:#333;'>1</div>
<div style='position:absolute;left:465px;top:539px;width:1162px;height:1px;background:#e2e2e2'></div>
<div class='t ' style='left:473px;top:518px;font-size:13px;line-height:13px;color:#333;'>Ель колючая Picea pungens Hoo...</div>
<div class='t ' style='left:702px;top:518px;font-size:13px;line-height:13px;color:#333;'>Корневая система: CUT</div>
<div class='t' style='right:724px;top:518px;font-size:13px;line-height:13px;color:#333;'>10</div>
<div class='t' style='right:600px;top:518px;font-size:13px;line-height:13px;color:#333;'>10</div>
<div class='t ' style='left:1230px;top:518px;font-size:13px;line-height:13px;color:#333;'>Поле / Карта 1 / Ряд 2</div>
<div class='t ' style='left:1428px;top:518px;font-size:13px;line-height:13px;color:#333;'>Посадка № 00000000007 ...</div>
<div style='position:absolute;left:465px;top:540px;width:1162px;height:28px;background:#f8f8f8'></div>
<div style='position:absolute;left:465px;top:568px;width:1162px;height:1px;background:#e2e2e2'></div>
<div class='t ' style='left:473px;top:547px;font-size:13px;line-height:13px;color:#333;'>Туя западная Thuja occidentalis ...</div>
<div class='t ' style='left:702px;top:547px;font-size:13px;line-height:13px;color:#333;'>Корневая система: P9</div>
<div class='t' style='right:724px;top:547px;font-size:13px;line-height:13px;color:#333;'>10</div>
<div class='t' style='right:527px;top:547px;font-size:13px;line-height:13px;color:#333;'>10</div>
<div class='t ' style='left:1230px;top:547px;font-size:13px;line-height:13px;color:#333;'>Оранжерея / Спэн 1 / Ряд 1</div>
<div class='t ' style='left:1428px;top:547px;font-size:13px;line-height:13px;color:#333;'>Посадка № 0P00-000054 ...</div>
<div style='position:absolute;left:465px;top:597px;width:1162px;height:1px;background:#e2e2e2'></div>
<div class='t ' style='left:473px;top:576px;font-size:13px;line-height:13px;color:#333;'>Микробиота перекрестнопарная ...</div>
<div class='t ' style='left:702px;top:576px;font-size:13px;line-height:13px;color:#333;'>Корневая система: P9</div>
<div class='t' style='right:724px;top:576px;font-size:13px;line-height:13px;color:#333;'>4</div>
<div class='t' style='right:527px;top:576px;font-size:13px;line-height:13px;color:#333;'>4</div>
<div class='t ' style='left:1230px;top:576px;font-size:13px;line-height:13px;color:#333;'>Поле / Карта 1 / Ряд 1</div>
<div class='t ' style='left:1428px;top:576px;font-size:13px;line-height:13px;color:#333;'>Посадка № 00000000007 ...</div>
<div style='position:absolute;left:465px;top:598px;width:1162px;height:28px;background:#f8f8f8'></div>
<div style='position:absolute;left:465px;top:626px;width:1162px;height:1px;background:#e2e2e2'></div>
<div class='t ' style='left:473px;top:605px;font-size:13px;line-height:13px;color:#333;'>Можжевельник горизонтальный ...</div>
<div class='t' style='right:724px;top:605px;font-size:13px;line-height:13px;color:#333;'>40</div>
<div class='t' style='right:527px;top:605px;font-size:13px;line-height:13px;color:#333;'>40</div>
<div class='t ' style='left:1230px;top:605px;font-size:13px;line-height:13px;color:#333;'>Поле / Карта 2 / Ряд 7</div>
<div class='t ' style='left:1428px;top:605px;font-size:13px;line-height:13px;color:#333;'>Посадка № 00000000001 ...</div>
<div class='t ' style='left:1614px;top:605px;font-size:13px;line-height:13px;color:#333;'>1</div>
<div style='position:absolute;left:465px;top:627px;width:1162px;height:28px;background:#fdf0c2'></div>
<div style='position:absolute;left:692px;top:627px;width:1px;height:28px;background:#ffffff'></div>
<div style='position:absolute;left:875px;top:627px;width:1px;height:28px;background:#ffffff'></div>
<div style='position:absolute;left:945px;top:627px;width:1px;height:28px;background:#ffffff'></div>
<div style='position:absolute;left:1069px;top:627px;width:1px;height:28px;background:#ffffff'></div>
<div style='position:absolute;left:1142px;top:627px;width:1px;height:28px;background:#ffffff'></div>
<div style='position:absolute;left:1221px;top:627px;width:1px;height:28px;background:#ffffff'></div>
<div style='position:absolute;left:1419px;top:627px;width:1px;height:28px;background:#ffffff'></div>
<div style='position:absolute;left:1605px;top:627px;width:1px;height:28px;background:#ffffff'></div>
<div style='position:absolute;left:465px;top:628px;width:228px;height:26px;border:2px solid #f7c51a;background:#fde38c'></div>
<div style='position:absolute;left:465px;top:655px;width:1162px;height:1px;background:#e2e2e2'></div>
<div class='t ' style='left:473px;top:634px;font-size:13px;line-height:13px;color:#333;'>Можжевельник горизонтальный ...</div>
<div class='t ' style='left:702px;top:634px;font-size:13px;line-height:13px;color:#333;'>Корневая система: P9</div>
<div class='t' style='right:724px;top:634px;font-size:13px;line-height:13px;color:#333;'>30</div>
<div class='t' style='right:527px;top:634px;font-size:13px;line-height:13px;color:#333;'>30</div>
<div class='t ' style='left:1230px;top:634px;font-size:13px;line-height:13px;color:#333;'>Оранжерея / Спэн 2 / Ряд 8</div>
<div class='t ' style='left:1428px;top:634px;font-size:13px;line-height:13px;color:#333;'>Посадка № 0P00-000054 ...</div>
<div style='position:absolute;left:465px;top:656px;width:1162px;height:28px;background:#f8f8f8'></div>
<div style='position:absolute;left:465px;top:684px;width:1162px;height:1px;background:#e2e2e2'></div>
<div class='t ' style='left:473px;top:663px;font-size:13px;line-height:13px;color:#333;'>Можжевельник горизонтальный ...</div>
<div class='t ' style='left:702px;top:663px;font-size:13px;line-height:13px;color:#333;'>Корневая система: P9</div>
<div class='t' style='right:724px;top:663px;font-size:13px;line-height:13px;color:#333;'>50</div>
<div class='t' style='right:527px;top:663px;font-size:13px;line-height:13px;color:#333;'>50</div>
<div class='t ' style='left:1230px;top:663px;font-size:13px;line-height:13px;color:#333;'>Оранжерея / Спэн 1 / Ряд 4</div>
<div class='t ' style='left:1428px;top:663px;font-size:13px;line-height:13px;color:#333;'>Посадка № 0P00-000054 ...</div>
<div style='position:absolute;left:465px;top:713px;width:1162px;height:1px;background:#e2e2e2'></div>
<div class='t ' style='left:473px;top:692px;font-size:13px;line-height:13px;color:#333;'>Сосна горная Pinus mugo Mughus</div>
<div class='t ' style='left:702px;top:692px;font-size:13px;line-height:13px;color:#333;'>Корневая система: CUT</div>
<div class='t' style='right:724px;top:692px;font-size:13px;line-height:13px;color:#333;'>35</div>
<div class='t' style='right:600px;top:692px;font-size:13px;line-height:13px;color:#333;'>35</div>
<div class='t ' style='left:1230px;top:692px;font-size:13px;line-height:13px;color:#333;'>Площадка выдачи / №1</div>
<div class='t ' style='left:1428px;top:692px;font-size:13px;line-height:13px;color:#333;'>Посадка № 00000000002 ...</div>
<div class='t ' style='left:1614px;top:692px;font-size:13px;line-height:13px;color:#333;'>1</div>
<div style='position:absolute;left:465px;top:714px;width:1162px;height:28px;background:#f8f8f8'></div>
<div style='position:absolute;left:465px;top:742px;width:1162px;height:1px;background:#e2e2e2'></div>
<div class='t ' style='left:473px;top:721px;font-size:13px;line-height:13px;color:#333;'>Сосна горная Pinus mugo Mughus</div>
<div class='t ' style='left:702px;top:721px;font-size:13px;line-height:13px;color:#333;'>Корневая система: CUT</div>
<div class='t' style='right:600px;top:721px;font-size:13px;line-height:13px;color:#333;'>10</div>
<div class='t ' style='left:1230px;top:721px;font-size:13px;line-height:13px;color:#333;'>Поле / Карта 4 / Ряд 14</div>
<div class='t ' style='left:1428px;top:721px;font-size:13px;line-height:13px;color:#333;'>Посадка № 00000000002 ...</div>
<div class='t ' style='left:1614px;top:721px;font-size:13px;line-height:13px;color:#333;'>1</div>
<div style='position:absolute;left:465px;top:750px;width:1162px;height:31px;background:#f0f0f0'></div>
<div style='position:absolute;left:465px;top:750px;width:1162px;height:1px;background:#c8c8c8'></div>
<div style='position:absolute;left:692px;top:751px;width:1px;height:30px;background:#d8d8d8'></div>
<div style='position:absolute;left:693px;top:751px;width:1px;height:30px;background:#fafafa'></div>
<div style='position:absolute;left:875px;top:751px;width:1px;height:30px;background:#d8d8d8'></div>
<div style='position:absolute;left:876px;top:751px;width:1px;height:30px;background:#fafafa'></div>
<div style='position:absolute;left:945px;top:751px;width:1px;height:30px;background:#d8d8d8'></div>
<div style='position:absolute;left:946px;top:751px;width:1px;height:30px;background:#fafafa'></div>
<div style='position:absolute;left:1069px;top:751px;width:1px;height:30px;background:#d8d8d8'></div>
<div style='position:absolute;left:1070px;top:751px;width:1px;height:30px;background:#fafafa'></div>
<div style='position:absolute;left:1142px;top:751px;width:1px;height:30px;background:#d8d8d8'></div>
<div style='position:absolute;left:1143px;top:751px;width:1px;height:30px;background:#fafafa'></div>
<div style='position:absolute;left:1221px;top:751px;width:1px;height:30px;background:#d8d8d8'></div>
<div style='position:absolute;left:1222px;top:751px;width:1px;height:30px;background:#fafafa'></div>
<div style='position:absolute;left:1419px;top:751px;width:1px;height:30px;background:#d8d8d8'></div>
<div style='position:absolute;left:1420px;top:751px;width:1px;height:30px;background:#fafafa'></div>
<div style='position:absolute;left:1605px;top:751px;width:1px;height:30px;background:#d8d8d8'></div>
<div style='position:absolute;left:1606px;top:751px;width:1px;height:30px;background:#fafafa'></div>
<div class='t' style='right:724px;top:758px;font-size:13px;line-height:13px;color:#4d4d4d;'>3 254,00</div>
<div class='t' style='right:600px;top:758px;font-size:13px;line-height:13px;color:#4d4d4d;'>1 229,00</div>
<div class='t' style='right:527px;top:758px;font-size:13px;line-height:13px;color:#4d4d4d;'>2 025,00</div>
<div style='position:absolute;left:1531px;top:781px;width:97px;height:22px;border:1px solid #a0a0a0;background:linear-gradient(#fff,#f0f0f0)'></div>
<div style='position:absolute;left:1555px;top:782px;width:1px;height:20px;background:#a8a8a8'></div>
<div style='position:absolute;left:1579px;top:782px;width:1px;height:20px;background:#a8a8a8'></div>
<div style='position:absolute;left:1603px;top:782px;width:1px;height:20px;background:#a8a8a8'></div>
<svg style='position:absolute;left:1539px;top:788px;' width='10' height='8' viewBox='0 0 10 8'><rect x='0' y='0.6' width='9' height='1' fill='#333'/><path d='M0 7 L4.5 1.8 L9 7 Z' fill='#333'/></svg>
<svg style='position:absolute;left:1563px;top:789px;' width='10' height='7' viewBox='0 0 10 7'><path d='M0 6 L4.5 0.8 L9 6 Z' fill='#333'/></svg>
<svg style='position:absolute;left:1587px;top:789px;' width='10' height='7' viewBox='0 0 10 7'><path d='M0 0.8 L4.5 6 L9 0.8 Z' fill='#333'/></svg>
<svg style='position:absolute;left:1611px;top:789px;' width='10' height='8' viewBox='0 0 10 8'><path d='M0 0.8 L4.5 5.6 L9 0.8 Z' fill='#333'/><rect x='0' y='6.2' width='9' height='1' fill='#333'/></svg>
<div class='t ' style='left:217px;top:814px;font-size:13px;line-height:13px;color:#9b1c1c;'>Можжевельник горизонтальный Juniperus horizontalis Jade River</div>
<div style='position:absolute;left:353px;top:807px;width:964px;height:265px;border:1px solid #a0a0a0;background:#fff'></div>
<svg style='position:absolute;left:369px;top:820px;' width='17' height='19' viewBox='0 0 17 19'><polygon points='8.50,1.10 10.52,6.51 16.30,6.77 11.78,10.36 13.32,15.93 8.50,12.74 3.68,15.93 5.22,10.36 0.70,6.77 6.48,6.51' fill='none' stroke='#b8bec6' stroke-width='1.1' stroke-linejoin='round'/></svg>
<div class='t ' style='left:398px;top:820px;font-size:18px;line-height:18px;color:#111;letter-spacing:0.35px'>Укажите количество</div>
<svg style='position:absolute;left:1194px;top:819px;' width='17' height='17' viewBox='0 0 17 17'><g fill='none' stroke='#444' stroke-width='1.35' stroke-linecap='round'><path d='M7.4 4.3 L10.2 1.8 Q12.6 0 14.8 2.3 Q16.8 4.6 14.7 7 L12.3 9.4'/><path d='M4.5 7.2 L2.1 9.7 Q0.2 12.2 2.4 14.5 Q4.8 16.7 7.4 14.6 L9.7 12.1'/><path d='M6.4 10.5 L10.7 6.3'/></g></svg>
<svg style='position:absolute;left:1232px;top:822px;' width='4' height='12' viewBox='0 0 4 12'><circle cx='2' cy='1.8' r='1.6' fill='#777'/><circle cx='2' cy='6' r='1.6' fill='#777'/><circle cx='2' cy='10.2' r='1.6' fill='#777'/></svg>
<svg style='position:absolute;left:1261px;top:824px;' width='10' height='10' viewBox='0 0 10 10'><rect x='0.6' y='0.6' width='8.8' height='8.4' fill='none' stroke='#333' stroke-width='1.2'/></svg>
<svg style='position:absolute;left:1290px;top:823px;' width='11' height='11' viewBox='0 0 11 11'><path d='M0.5 0.5 L10.5 10.5 M10.5 0.5 L0.5 10.5' stroke='#333' stroke-width='1.1'/></svg>
<div class='yb' style='left:366px;top:851px;width:46px;height:26px;'></div>
<div class='t ' style='left:380px;top:857px;font-size:13px;line-height:13px;color:#333;font-weight:bold;'>ОК</div>
<div class='b' style='left:421px;top:851px;width:93px;height:26px;'></div>
<svg style='position:absolute;left:431px;top:859px;' width='11' height='11' viewBox='0 0 11 11'><path d='M1 1 L10 10 M10 1 L1 10' stroke='#333' stroke-width='1.7'/></svg>
<div class='t ' style='left:452px;top:857px;font-size:13px;line-height:13px;color:#333;letter-spacing:-0.3px'>Закрыть</div>
<div class='t ' style='left:366px;top:892px;font-size:13px;line-height:13px;color:#4d4d4d;'>Культура:</div>
<div class='inpl' style='left:493px;top:887px;width:410px;height:25px;'></div>
<div style='position:absolute;left:881px;top:888px;width:1px;height:23px;background:#d9d9d9'></div>
<svg style='position:absolute;left:888px;top:894px;' width='10' height='10' viewBox='0 0 10 10'><g fill='none' stroke='#3c3c3c' stroke-width='1.1'><rect x='3.5' y='0.5' width='5' height='5'/><path d='M2.5 3.5 H0.5 V8.5 H5.5 V6.8'/></g></svg>
<div class='t' style='left:497px;top:892px;font-size:13px;line-height:13px;color:#333;font-weight:bold;letter-spacing:0.13px;overflow:hidden;width:381px'>Можжевельник горизонтальный Juniperus horizontalis Jade River</div>
<div class='t ' style='left:366px;top:926px;font-size:13px;line-height:13px;color:#4d4d4d;'>Характеристика:</div>
<div class='inpl' style='left:493px;top:921px;width:410px;height:25px;'></div>
<div style='position:absolute;left:881px;top:922px;width:1px;height:23px;background:#d9d9d9'></div>
<svg style='position:absolute;left:888px;top:928px;' width='10' height='10' viewBox='0 0 10 10'><g fill='none' stroke='#3c3c3c' stroke-width='1.1'><rect x='3.5' y='0.5' width='5' height='5'/><path d='M2.5 3.5 H0.5 V8.5 H5.5 V6.8'/></g></svg>
<div class='t' style='left:497px;top:926px;font-size:13px;line-height:13px;color:#333;font-weight:bold;letter-spacing:0.13px;overflow:hidden;width:382px'>Корневая система: P9</div>
<div class='t ' style='left:366px;top:960px;font-size:13px;line-height:13px;color:#4d4d4d;'>Номенклатура:</div>
<div class='inpl' style='left:493px;top:955px;width:410px;height:25px;'></div>
<div style='position:absolute;left:881px;top:956px;width:1px;height:23px;background:#d9d9d9'></div>
<svg style='position:absolute;left:888px;top:962px;' width='10' height='10' viewBox='0 0 10 10'><g fill='none' stroke='#3c3c3c' stroke-width='1.1'><rect x='3.5' y='0.5' width='5' height='5'/><path d='M2.5 3.5 H0.5 V8.5 H5.5 V6.8'/></g></svg>
<div class='t' style='left:497px;top:960px;font-size:13px;line-height:13px;color:#333;letter-spacing:-0.07px;overflow:hidden;width:381px'>Можжевельник горизонтальный Juniperus horizontalis Jade River</div>
<div class='t ' style='left:366px;top:996px;font-size:13px;line-height:13px;color:#4d4d4d;'>Добавить в корзину:</div>
<div style='position:absolute;left:490px;top:986px;width:186px;height:35px;border:2px solid #f5c518;background:#fff'></div>
<div style='position:absolute;left:630px;top:990px;width:1px;height:28px;background:#bdbdbd'></div>
<div style='position:absolute;left:651px;top:990px;width:1px;height:28px;background:#bdbdbd'></div>
<div style='position:absolute;left:652px;top:1003px;width:21px;height:1px;background:#bdbdbd'></div>
<svg style='position:absolute;left:659px;top:995px;' width='5' height='4' viewBox='0 0 5 4'><path d='M0.8 3 L2.5 1 L4.2 3Z' fill='#444'/></svg>
<svg style='position:absolute;left:659px;top:1008px;' width='5' height='4' viewBox='0 0 5 4'><path d='M0.8 1 L2.5 3 L4.2 1Z' fill='#444'/></svg>
<svg style='position:absolute;left:636px;top:997px;' width='10' height='12' viewBox='0 0 10 12'><rect x='0.5' y='0.5' width='8' height='10' rx='0.8' fill='none' stroke='#444' stroke-width='1'/><rect x='1' y='1' width='7' height='1.6' fill='#444'/><g fill='#444'><rect x='2' y='4' width='1' height='1'/><rect x='4' y='4' width='1' height='1'/><rect x='6' y='4' width='1' height='1'/><rect x='2' y='6' width='1' height='1'/><rect x='4' y='6' width='1' height='1'/><rect x='6' y='6' width='1' height='1'/><rect x='2' y='8' width='1' height='1'/><rect x='4' y='8' width='1' height='1'/><rect x='6' y='8' width='1' height='1'/></g></svg>
<div class='t' style='right:1034px;top:996px;font-size:16px;line-height:16px;color:#c0281e;font-weight:bold;letter-spacing:-0.4px'>10,00</div>
<div style='position:absolute;left:605px;top:995px;width:1px;height:18px;background:#111'></div>
<div class='b' style='left:683px;top:990px;width:30px;height:26px;'></div>
<svg style='position:absolute;left:694px;top:999px;' width='9' height='9' viewBox='0 0 9 9'><path d='M4 0 V8 M0 4 H8' stroke='#2a9420' stroke-width='2'/></svg>
<div class='t ' style='left:366px;top:1032px;font-size:13px;line-height:13px;color:#4d4d4d;'>Мест (в заказе):</div>
<div class='inp' style='left:493px;top:1027px;width:112px;height:25px;'></div>
<div style='position:absolute;left:583px;top:1028px;width:1px;height:23px;background:#a9a9a9'></div>
<svg style='position:absolute;left:589px;top:1033px;' width='10' height='12' viewBox='0 0 10 12'><rect x='0.5' y='0.5' width='8' height='10' rx='0.8' fill='none' stroke='#444' stroke-width='1'/><rect x='1' y='1' width='7' height='1.6' fill='#444'/><g fill='#444'><rect x='2' y='4' width='1' height='1'/><rect x='4' y='4' width='1' height='1'/><rect x='6' y='4' width='1' height='1'/><rect x='2' y='6' width='1' height='1'/><rect x='4' y='6' width='1' height='1'/><rect x='6' y='6' width='1' height='1'/><rect x='2' y='8' width='1' height='1'/><rect x='4' y='8' width='1' height='1'/><rect x='6' y='8' width='1' height='1'/></g></svg>
<div class='t' style='right:1081px;top:1032px;font-size:13px;line-height:13px;color:#333;'>1,000</div>
<div class='t ' style='left:615px;top:1029px;font-size:13px;line-height:13px;color:#4d4d4d;'>Ед.</div>
<div class='t ' style='left:615px;top:1045px;font-size:13px;line-height:13px;color:#4d4d4d;'>изм.:</div>
<div class='inp' style='left:674px;top:1027px;width:113px;height:25px;'></div>
<div style='position:absolute;left:744px;top:1028px;width:1px;height:23px;background:#a9a9a9'></div>
<div style='position:absolute;left:765px;top:1028px;width:1px;height:23px;background:#a9a9a9'></div>
<svg style='position:absolute;left:752px;top:1037px;' width='6' height='4' viewBox='0 0 6 4'><path d='M0 0 H5.2 L2.6 3 Z' fill='#3c3c3c'/></svg>
<svg style='position:absolute;left:772px;top:1034px;' width='10' height='10' viewBox='0 0 10 10'><g fill='none' stroke='#3c3c3c' stroke-width='1.1'><rect x='3.5' y='0.5' width='5' height='5'/><path d='M2.5 3.5 H0.5 V8.5 H5.5 V6.8'/></g></svg>
<div class='t' style='left:678px;top:1032px;font-size:13px;line-height:13px;color:#333;overflow:hidden;width:64px'>шт</div>
<div class='t ' style='left:797px;top:1032px;font-size:13px;line-height:13px;color:#b0b0b0;'>Коэф.:</div>
<div class='inpl' style='left:841px;top:1027px;width:81px;height:25px;'></div>
<div class='t' style='right:744px;top:1032px;font-size:13px;line-height:13px;color:#a0a0a0;'>1,0000</div>
<div style='position:absolute;left:926px;top:887px;width:1px;height:172px;background:repeating-linear-gradient(180deg,#d2d2d2 0 4px,transparent 4px 6px)'></div>
<div class='t ' style='left:932px;top:892px;font-size:13px;line-height:13px;color:#4d4d4d;'>Участок:</div>
<div class='inpl' style='left:1003px;top:887px;width:294px;height:25px;'></div>
<div style='position:absolute;left:1275px;top:888px;width:1px;height:23px;background:#d9d9d9'></div>
<svg style='position:absolute;left:1282px;top:894px;' width='10' height='10' viewBox='0 0 10 10'><g fill='none' stroke='#3c3c3c' stroke-width='1.1'><rect x='3.5' y='0.5' width='5' height='5'/><path d='M2.5 3.5 H0.5 V8.5 H5.5 V6.8'/></g></svg>
<div class='t' style='left:1007px;top:892px;font-size:13px;line-height:13px;color:#333;overflow:hidden;width:266px'>Оранжерея / Спэн 1 / Ряд 4</div>
<div class='t ' style='left:932px;top:926px;font-size:13px;line-height:13px;color:#4d4d4d;'>Посадка:</div>
<div class='inpl' style='left:1003px;top:921px;width:294px;height:25px;'></div>
<div style='position:absolute;left:1275px;top:922px;width:1px;height:23px;background:#d9d9d9'></div>
<svg style='position:absolute;left:1282px;top:928px;' width='10' height='10' viewBox='0 0 10 10'><g fill='none' stroke='#3c3c3c' stroke-width='1.1'><rect x='3.5' y='0.5' width='5' height='5'/><path d='M2.5 3.5 H0.5 V8.5 H5.5 V6.8'/></g></svg>
<div class='t' style='left:1007px;top:926px;font-size:13px;line-height:13px;color:#333;overflow:hidden;width:266px'>Посадка № 0P00-000054 от 08.05.2023</div>
<div class='t ' style='left:932px;top:960px;font-size:13px;line-height:13px;color:#4d4d4d;'>В наличии:</div>
<div class='inpl' style='left:1003px;top:955px;width:131px;height:25px;'></div>
<div class='t' style='right:531px;top:960px;font-size:13px;line-height:13px;color:#333;'>50,00</div>
<div class='t ' style='left:1144px;top:960px;font-size:13px;line-height:13px;color:#4d4d4d;'>Резерв:</div>
<div class='inpl' style='left:1195px;top:955px;width:81px;height:25px;'></div>
<div class='t' style='right:389px;top:960px;font-size:13px;line-height:13px;color:#333;'>0,00</div>
<div class='t ' style='left:932px;top:994px;font-size:13px;line-height:13px;color:#4d4d4d;'>Доступно:</div>
<div class='inpl' style='left:1003px;top:989px;width:131px;height:25px;'></div>
<div class='t' style='right:531px;top:994px;font-size:13px;line-height:13px;color:#333;'>50,00</div>
<div class='t' style='left:8px;top:235px;font-size:13px;line-height:13px;color:#000'>1. Нажмите кнопку <b><i>Подбор</i></b></div>
<div class='t' style='left:9px;top:251px;font-size:13px;line-height:13px;color:#000'><b><i>продукции растениеводства</i></b> —</div>
<div class='t' style='left:8px;top:268px;font-size:12px;line-height:12px;color:#000'><b>Подбор растений</b>.</div>
<div class='t' style='left:25px;top:647px;font-size:12px;line-height:12px;color:#000'>2. Дважды щелкните по</div>
<div class='t' style='left:25px;top:662px;font-size:12px;line-height:12px;color:#000'>растению мышью или</div>
<div class='t' style='left:25px;top:676px;font-size:12px;line-height:12px;color:#000'>нажмите на нем Enter.</div>
<div class='t' style='left:31px;top:877px;font-size:12px;line-height:12px;color:#000'>4. Нажмите <b><i>ОК</i></b>.</div>
<div class='t' style='left:31px;top:1026px;font-size:12px;line-height:12px;color:#000'>3. Введите количество.</div>
<svg style='position:absolute;left:0;top:0' width='1661' height='1073'><g stroke='#1a1a1a' stroke-width='1.45' fill='none'><path d='M172 272.5 L644 240'/><path d='M170 661.5 L464 642.5'/><path d='M127 881.5 L365 864'/><path d='M168 1031.5 L491 1015'/></g><g fill='#ff0000' stroke='none'><path d='M885.7 245 L887.5 245 L883.5 290 L881.7 290 Z'/><path d='M878.8 288.5 L886 288.5 L880.6 308 Z'/><rect x='682.8' y='654' width='2' height='136'/><path d='M680 788 L687.6 788 L683.8 806.5 Z'/></g></svg></body></html>
